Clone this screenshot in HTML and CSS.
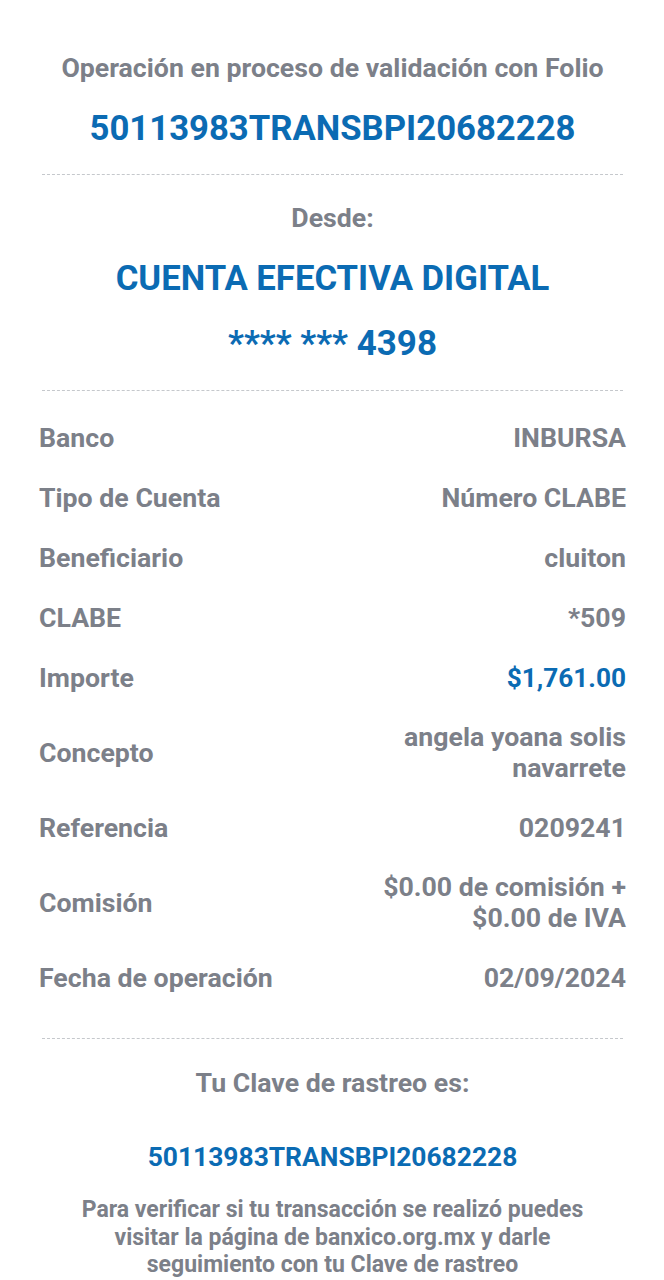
FILE: index.html
```html
<!DOCTYPE html>
<html lang="es">
<head>
<meta charset="utf-8">
<title>Comprobante</title>
<link rel="stylesheet" href="styles.css">
</head>
<body>
<main class="receipt">
  <section class="head">
    <p class="muted title">Operación en proceso de validación con Folio</p>
    <p class="folio">50113983TRANSBPI20682228</p>
  </section>
  <hr class="dash">
  <section class="from">
    <p class="muted desde">Desde:</p>
    <p class="account">CUENTA EFECTIVA DIGITAL</p>
    <p class="mask"><span class="stars">**** ***</span> <span class="last">4398</span></p>
  </section>
  <hr class="dash">
  <section class="rows">
    <div class="row"><span class="label">Banco</span><span class="value">INBURSA</span></div>
    <div class="row"><span class="label">Tipo de Cuenta</span><span class="value">Número CLABE</span></div>
    <div class="row"><span class="label">Beneficiario</span><span class="value">cluiton</span></div>
    <div class="row"><span class="label">CLABE</span><span class="value">*509</span></div>
    <div class="row"><span class="label">Importe</span><span class="value blue">$1,761.00</span></div>
    <div class="row two"><span class="label">Concepto</span><span class="value">angela yoana solis<br>navarrete</span></div>
    <div class="row"><span class="label">Referencia</span><span class="value">0209241</span></div>
    <div class="row two"><span class="label">Comisión</span><span class="value">$0.00 de comisión +<br>$0.00 de IVA</span></div>
    <div class="row"><span class="label">Fecha de operación</span><span class="value">02/09/2024</span></div>
  </section>
  <hr class="dash">
  <section class="track">
    <p class="muted track-title">Tu Clave de rastreo es:</p>
    <p class="track-code">50113983TRANSBPI20682228</p>
    <p class="muted note">Para verificar si tu transacción se realizó puedes<br>visitar la página de banxico.org.mx y darle<br>seguimiento con tu Clave de rastreo</p>
  </section>
</main>
</body>
</html>
```

FILE: styles.css
```css
* { box-sizing: border-box; }
html, body { margin: 0; padding: 0; background: #fff; }
body {
  font-family: Roboto, "Noto Sans", sans-serif;
  font-weight: 700;
  color: #7c8089;
}
p { margin: 0; }
.receipt {
  width: 664px;
  padding: 0 38px 0 39px;
  display: flex;
  flex-direction: column;
}
.head, .from, .track {
  display: flex;
  flex-direction: column;
  align-items: center;
  text-align: center;
}
.muted { color: #7c8089; }
.head { padding-top: 50px; }
.title { font-size: 26.7px; line-height: 36px; white-space: nowrap; }
.folio {
  margin-top: 22px;
  font-size: 34.7px; line-height: 40px;
  color: #0b6bb3;
}
.dash {
  border: 0;
  border-top: 1px dashed #c5c8cc;
  margin: 26px 3px 0;
  height: 0;
}
.from { padding-top: 25px; }
.desde { font-size: 26.7px; line-height: 36px; }
.account {
  margin-top: 22px;
  font-size: 34.7px; line-height: 40px;
  color: #0b6bb3;
}
.mask {
  margin-top: 24px;
  color: #0b6bb3;
  font-size: 35px;
  line-height: 44px;
  height: 44px;
  white-space: nowrap;
}
.stars { font-size: 35px; }
.last { font-size: 35px; }
.from + .dash { margin-top: 24px; }
.rows { padding-top: 17px; display: flex; flex-direction: column; }
.row {
  display: flex;
  justify-content: space-between;
  align-items: center;
  font-size: 26.7px;
  height: 60px;
  line-height: 31px;
}
.row.two { height: 90px; }
.label { color: #7c8089; }
.value { text-align: right; color: #7c8089; }
.value.blue { color: #0b6bb3; font-size: 26.2px; }
.rows + .dash { margin-top: 30px; }
.track { padding-top: 26px; }
.track-title { font-size: 26.7px; line-height: 36px; }
.track-code {
  margin-top: 40px;
  font-size: 26.4px; line-height: 32px;
  color: #0b6bb3;
}
.note {
  margin-top: 23px;
  font-size: 23px; line-height: 27.5px;
}
```
